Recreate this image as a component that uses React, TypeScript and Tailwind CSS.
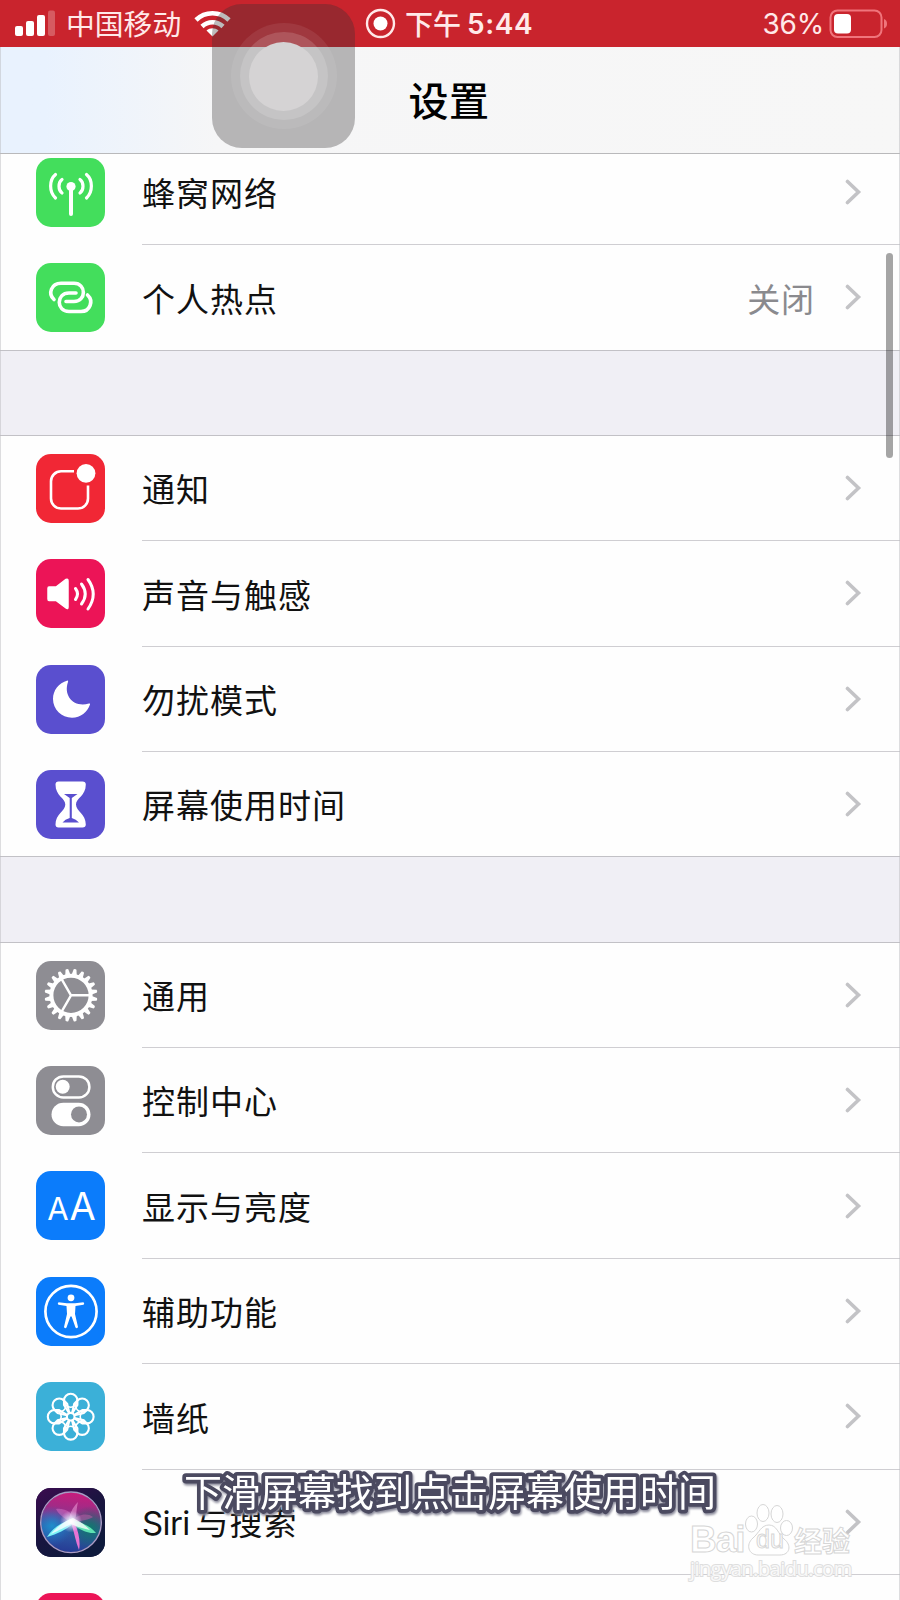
import React from 'react';

const CellularIcon = () => (
  <svg viewBox="0 0 69 69" className="h-full w-full" fill="none" stroke="white" strokeWidth="3.2" strokeLinecap="round">
    <circle cx="35" cy="28.5" r="4.6" fill="white" stroke="none" />
    <path d="M35 29V56" strokeWidth="4" />
    <path d="M26 21.5C22 24.5 22 32 26 35M44 21.5C48 24.5 48 32 44 35" />
    <path d="M19.5 16.5C13 22 13 34 19.5 40M50.5 16.5C57 22 57 34 50.5 40" />
  </svg>
);

const HotspotIcon = () => (
  <svg viewBox="0 0 69 69" className="h-full w-full" fill="none" stroke="white" strokeWidth="3.6" strokeLinecap="round">
    <path d="M18 36.5C11.5 30.5 15.5 20.3 25 20.3H38C50.5 20.3 50.5 38.5 38 38.5H30" />
    <path d="M51.5 32C58 38 54 48.5 45 48.5H33C20 48.5 20 30 33 30H40" />
  </svg>
);

const NotificationIcon = () => (
  <svg viewBox="0 0 69 69" className="h-full w-full" fill="none" stroke="white" strokeWidth="2.6">
    <path d="M38 17.3H25A10 10 0 0 0 15 27.3V44.5A10 10 0 0 0 25 54.5H42A10 10 0 0 0 52 44.5V31.5" />
    <circle cx="50" cy="19.3" r="9.4" fill="white" stroke="none" />
  </svg>
);

const SoundIcon = () => (
  <svg viewBox="0 0 69 69" className="h-full w-full" fill="none" stroke="white" strokeWidth="3" strokeLinecap="round">
    <path d="M13 28H20L30 20.5Q32 19.5 32 22V48Q32 50.5 30 49L20 41.5H13Q12 41.5 12 40V29.5Q12 28 13 28Z" fill="white" strokeWidth="1.5" />
    <path d="M39.5 29.5Q43.5 35 39.5 40.5M45.5 25Q53 35 45.5 45M52 20.5Q62.5 35 52 50" />
  </svg>
);

const MoonIcon = () => (
  <svg viewBox="0 0 69 69" className="h-full w-full">
    <path d="M31.5 15.5C22.5 18 17 25.5 17 34C17 44.5 25.5 52.7 36 52.7C44.5 52.7 51.5 47 54 39.5Q54.5 38 53 38.5C38 43 27 31 32 17Q32.4 15.3 31.5 15.5Z" fill="white" />
  </svg>
);

const HourglassIcon = () => (
  <svg viewBox="0 0 69 69" className="h-full w-full">
    <path d="M22.5 11.5H46.5Q49.8 11.5 49.8 14.5C49.8 26 40 28 40 34.5C40 41 49.8 44 49.8 54.5Q49.8 57.5 46.5 57.5H22.5Q19.5 57.5 19.5 54.5C19.5 44 29.3 41 29.3 34.5C29.3 28 19.5 26 19.5 14.5Q19.5 11.5 22.5 11.5Z" fill="white" />
    <path d="M28 24H41.5L35.8 28V48Q40 49 43 52.5H26.5Q29 49 33.7 48V28Z" fill="#5a4fcf" />
  </svg>
);

const GearIcon = () => (
  <svg viewBox="0 0 69 69" className="h-full w-full" fill="none" stroke="white">
    <circle cx="35" cy="34.3" r="19.6" strokeWidth="4" />
    {Array.from({ length: 20 }, (_, i) => (
      <path key={i} d="M32.3 14.3L33.6 8.2Q35 7.4 36.4 8.2L37.7 14.3Z" fill="white" stroke="none" transform={`rotate(${i * 18 + 9} 35 34.3)`} />
    ))}
    <path d="M35 34.3H53.5M35 34.3L25.8 18.3M35 34.3L25.8 50.3" strokeWidth="2.4" />
  </svg>
);

const ControlIcon = () => (
  <svg viewBox="0 0 69 69" className="h-full w-full">
    <rect x="16.8" y="10.4" width="36.6" height="21" rx="10.5" fill="none" stroke="white" strokeWidth="2.5" />
    <circle cx="26.7" cy="20.8" r="7" fill="white" />
    <rect x="15.5" y="36.7" width="39" height="23.6" rx="11.8" fill="white" />
    <circle cx="43" cy="48.4" r="8" fill="#8e8d93" />
  </svg>
);

const DisplayIcon = () => (
  <div className="flex h-full items-baseline justify-center gap-[2px] font-['Inter',sans-serif] leading-[71px] text-white">
    <span className="text-[31px] tracking-[-1px]">A</span>
    <span className="text-[38px] tracking-[-2px]">A</span>
  </div>
);

const AccessibilityIcon = () => (
  <svg viewBox="0 0 69 69" className="h-full w-full">
    <circle cx="35" cy="34.5" r="25.6" fill="none" stroke="white" strokeWidth="2.7" />
    <circle cx="35" cy="20.8" r="3.4" fill="white" />
    <path d="M22.5 25.2L31 26.2H39L47.5 25.2Q49 26.7 47.5 27.8L39.5 29L39 37L42 50Q41 52 39.5 50.6L35.6 39.5H34.4L30.5 50.6Q29 52 28 50L31 37L30.5 29L22.5 27.8Q21 26.7 22.5 25.2Z" fill="white" />
  </svg>
);

const WallpaperIcon = () => (
  <svg viewBox="0 0 69 69" className="h-full w-full" fill="none" stroke="white" strokeWidth="2.1">
    {[0, 45, 90, 135, 180, 225, 270, 315].map((angle) => (
      <path key={angle} d="M33 31L28 23V18.5A6.7 6.7 0 0 1 41.4 18.5V23L36.4 31" transform={`rotate(${angle} 34.7 34.7)`} />
    ))}
    {[0, 45, 90, 135, 180, 225, 270, 315].map((angle) => (
      <path key={angle} d="M28 18.5A6.7 6.7 0 0 0 41.4 18.5" strokeWidth="1.6" transform={`rotate(${angle} 34.7 34.7)`} />
    ))}
    <circle cx="34.7" cy="34.7" r="3.8" />
  </svg>
);

const SiriIcon = () => (
  <svg viewBox="0 0 69 69" className="h-full w-full">
    <defs>
      <linearGradient id="siriBack" x1="0" y1="0" x2="0.6" y2="1">
        <stop offset="0" stopColor="#3c0b50" />
        <stop offset="0.5" stopColor="#1b1440" />
        <stop offset="1" stopColor="#0e1a3c" />
      </linearGradient>
      <linearGradient id="siriOrb" x1="0.5" y1="0" x2="0.4" y2="1">
        <stop offset="0" stopColor="#c81c7c" />
        <stop offset="0.35" stopColor="#93308a" />
        <stop offset="0.6" stopColor="#2e62a8" />
        <stop offset="1" stopColor="#263a94" />
      </linearGradient>
      <radialGradient id="siriBlue">
        <stop offset="0" stopColor="#1f8fcc" />
        <stop offset="1" stopColor="#1f6fc8" stopOpacity="0" />
      </radialGradient>
      <radialGradient id="siriGreen">
        <stop offset="0" stopColor="#0f7a6c" />
        <stop offset="1" stopColor="#12605f" stopOpacity="0" />
      </radialGradient>
      <radialGradient id="siriGlow">
        <stop offset="0" stopColor="white" />
        <stop offset="0.3" stopColor="#e8f4ff" stopOpacity="0.8" />
        <stop offset="1" stopColor="#e8d4ff" stopOpacity="0" />
      </radialGradient>
      <clipPath id="siriClip">
        <circle cx="35" cy="34.3" r="30" />
      </clipPath>
    </defs>
    <rect width="69" height="69" fill="url(#siriBack)" />
    <g clipPath="url(#siriClip)">
      <circle cx="35" cy="34.3" r="30" fill="url(#siriOrb)" />
      <circle cx="16" cy="38" r="20" fill="url(#siriBlue)" />
      <circle cx="54" cy="40" r="22" fill="url(#siriGreen)" />
      <path d="M36 31C27 34 17 39 11 49C22 46 31 41 38 35Z" fill="#7df3f5" />
      <path d="M33 31C43 34 54 37 60 45C50 46 41 40 34 34Z" fill="#5fe3b4" />
      <path d="M34 32C38 42 39 52 43 62C45 53 42 41 37 32Z" fill="#e873d4" />
      <path d="M35 34C29 31 22 26 20 21C30 20 38 25 37 34Z" fill="#d874c8" fillOpacity="0.5" />
      <path d="M33 34C33 27 36 20 42 14C40 22 41 28 38 34Z" fill="#f6a5df" fillOpacity="0.5" />
      <path d="M35 33C41 27 51 24 57 29C52 32 43 34 35 33Z" fill="#c85aa8" fillOpacity="0.5" />
      <circle cx="35" cy="33.5" r="11" fill="url(#siriGlow)" />
      <path d="M37 30C29 33 22 38 15 46C24 42 29 39 35 36C39 38 45 40 54 42C48 36 43 33 37 30Z" fill="white" fillOpacity="0.75" />
    </g>
    <circle cx="35" cy="34.3" r="30.3" fill="none" stroke="#a99bc4" strokeWidth="1.4" />
  </svg>
);

type Item = {
  label: React.ReactNode;
  color: string;
  icon: React.ReactNode;
  value?: string;
};

const network: Item[] = [
  { label: '蜂窝网络', color: 'bg-[#43de5c]', icon: <CellularIcon /> },
  { label: '个人热点', color: 'bg-[#43de5c]', icon: <HotspotIcon />, value: '关闭' },
];

const alerts: Item[] = [
  { label: '通知', color: 'bg-[#f12735]', icon: <NotificationIcon /> },
  { label: '声音与触感', color: 'bg-[#ec1457]', icon: <SoundIcon /> },
  { label: '勿扰模式', color: 'bg-[#5a4fcf]', icon: <MoonIcon /> },
  { label: '屏幕使用时间', color: 'bg-[#5a4fcf]', icon: <HourglassIcon /> },
];

const siriLabel = (
  <>
    <span className="font-['Inter',sans-serif] tracking-[-0.6px] [word-spacing:-3px]">Siri </span>
    与搜索
  </>
);

const system: Item[] = [
  { label: '通用', color: 'bg-[#8e8d93]', icon: <GearIcon /> },
  { label: '控制中心', color: 'bg-[#8e8d93]', icon: <ControlIcon /> },
  { label: '显示与亮度', color: 'bg-[#0b7cfb]', icon: <DisplayIcon /> },
  { label: '辅助功能', color: 'bg-[#0b7cfb]', icon: <AccessibilityIcon /> },
  { label: '墙纸', color: 'bg-[#3bb0d8]', icon: <WallpaperIcon /> },
  { label: siriLabel, color: 'bg-[#1b1440]', icon: <SiriIcon /> },
  { label: '', color: 'bg-[#ec1457]', icon: null },
];

const Row = ({ item }: { item: Item }) => (
  <div className="group flex h-[105.4px] shrink-0 pl-9 last:border-b last:border-[#c2c1c6]">
    <div className={`mt-[18px] h-[69px] w-[69px] shrink-0 overflow-hidden rounded-[15px] ${item.color}`}>{item.icon}</div>
    <div className="ml-[37px] flex flex-1 items-center border-b border-[#cfced2] pr-[38px] group-last:border-b-0">
      <span className="flex-1 pt-[2px] text-[33px] tracking-[1px] whitespace-pre text-[#111]">{item.label}</span>
      {item.value && <span className="mr-[30px] pt-[2px] text-[33px] tracking-[0.9px] text-[#8a8a8e]">{item.value}</span>}
      <svg width="17" height="26" viewBox="0 0 17 26" fill="none" stroke="#c3c3c6" strokeWidth="3.6" strokeLinecap="round">
        <path d="M2.5 2.5L13.5 13L2.5 23.5" />
      </svg>
    </div>
  </div>
);

const Group = ({ items }: { items: Item[] }) => (
  <div className="border-t border-[#c2c1c6] bg-[#fefefe]">
    {items.map((item, i) => (
      <Row key={i} item={item} />
    ))}
  </div>
);

const StatusBar = () => (
  <div className="flex h-[47px] items-center bg-[#c9242d] pl-[15px] text-[#ffe9e9]">
    <svg width="40" height="27" viewBox="0 0 40 27" fill="white">
      <rect x="0" y="16" width="8" height="10" rx="2" />
      <rect x="11" y="11" width="8" height="15" rx="2" />
      <rect x="22" y="5" width="8" height="21" rx="2" />
      <rect x="33" y="0.5" width="7" height="25.5" rx="2" fillOpacity="0.25" />
    </svg>
    <span className="mb-px ml-[11px] w-[128px] text-[28.8px]">中国移动</span>
    <svg width="37" height="28" viewBox="0 0 37 28" fill="none" stroke="white" strokeWidth="4.6">
      <path d="M2 10C11 1 26 1 35 10" />
      <path d="M8 16.5C14 10.8 23 10.8 29 16.5" />
      <path d="M18.5 26.5L12.5 20.5C16 17.5 21 17.5 24.5 20.5Z" fill="white" stroke="none" />
    </svg>
    <svg width="31" height="31" viewBox="0 0 31 31" className="ml-[134px]">
      <circle cx="15.5" cy="15.5" r="13.5" fill="none" stroke="#ffe9e9" strokeWidth="2.4" />
      <circle cx="15.5" cy="15.5" r="7" fill="white" />
    </svg>
    <span className="mb-[2px] ml-[9px] text-[28px] font-medium">下午</span>
    <span className="ml-[6px] font-['Inter',sans-serif] text-[28px] font-semibold tracking-[0.6px]">5:44</span>
    <span className="ml-auto font-['Inter',sans-serif] text-[28px] tracking-[-0.2px]">36%</span>
    <svg width="59" height="30" viewBox="0 0 59 30" className="mr-[12px] ml-[5px]">
      <rect x="1.5" y="1.5" width="51" height="26.5" rx="7" fill="none" stroke="#f0757c" strokeWidth="2" />
      <rect x="5" y="5" width="17" height="19.5" rx="4" fill="white" />
      <path d="M55 10Q58 11 58 14.7T55 19.5Z" fill="#f0757c" />
    </svg>
  </div>
);

const AssistiveTouch = () => (
  <div className="absolute top-1 left-[212px] z-20 flex h-36 w-[143px] items-center justify-center rounded-[30px] bg-[#343034]/33">
    <div className="flex h-[106px] w-[106px] items-center justify-center rounded-full bg-white/8">
      <div className="flex h-[88px] w-[88px] items-center justify-center rounded-full bg-white/15">
        <div className="h-[69px] w-[69px] rounded-full bg-[#d5d3d4]" />
      </div>
    </div>
  </div>
);

const Watermark = () => (
  <div className="absolute top-[1501px] left-[690px] z-20 w-[170px] text-white/80">
    <div className="flex h-[56px] items-end font-bold [-webkit-text-stroke:1px_#d6d6d6]">
      <span className="w-[55px] font-['Liberation_Sans',sans-serif] text-[37px] leading-[34px] tracking-[-1px]">Bai</span>
      <div className="relative h-[54px] w-[49px]">
        <svg width="50" height="54" viewBox="0 0 50 54" fill="white" fillOpacity="0.8" stroke="#d6d6d6">
          <ellipse cx="6.5" cy="21" rx="6" ry="8" />
          <ellipse cx="18" cy="10" rx="6" ry="8.5" />
          <ellipse cx="32" cy="11" rx="6" ry="8.5" />
          <ellipse cx="41.5" cy="25" rx="6" ry="7.5" />
          <path d="M24 22C16 22 14 30 8 35C0 42 4 52 13 52H35C45 52 47 42 39 36C33 31 32 22 24 22Z" />
        </svg>
        <span className="absolute top-[22px] left-[11px] font-['Liberation_Sans',sans-serif] text-[25px] leading-[28px] font-normal">du</span>
      </div>
      <span className="text-[28px] leading-[34px]">经验</span>
    </div>
    <div className="mt-[-2px] font-['Open_Sans',sans-serif] text-[20px] leading-[28px] tracking-[-0.5px] [-webkit-text-stroke:2px_#dedede] [paint-order:stroke_fill]">jingyan.baidu.com</div>
  </div>
);

const App = () => {
  return (
    <div className="relative flex h-[1600px] w-[900px] flex-col overflow-hidden bg-[#f0eff5] font-['Noto_Sans_CJK_SC',sans-serif]">
      <div className="relative z-10">
        <StatusBar />
        <div className="flex h-[107px] items-center justify-center border-b border-[#b9b9bb] bg-linear-to-r from-[#e9f2fe] from-5% via-[#f6f6f7] via-24% to-[#f7f7f7]">
          <h1 className="pr-[2px] pb-[3px] text-[40px] font-medium tracking-[0.5px] text-black">设置</h1>
        </div>
      </div>

      <div className="mt-[-15.1px] flex flex-col gap-[84.2px]">
        <Group items={network} />
        <Group items={alerts} />
        <Group items={system} />
      </div>

      {/* Scroll indicator */}
      <div className="absolute top-[253px] right-[7px] z-20 h-[205px] w-[7px] rounded-full bg-black/35" />

      <AssistiveTouch />

      {/* Caption */}
      <svg width="560" height="64" viewBox="0 0 560 64" className="absolute top-[1460px] left-[174px] z-20">
        <g fontSize="38" fontFamily="Noto Sans CJK SC, sans-serif">
          <text x="10" y="46" fill="white" stroke="#4b4a60" strokeWidth="7.5" strokeLinejoin="round" paintOrder="stroke" textLength="532" className="drop-shadow-[1px_2px_1px_#8c8c9c]">
            下滑屏幕找到点击屏幕使用时间
          </text>
        </g>
      </svg>

      <Watermark />

      <div className="pointer-events-none absolute inset-x-0 top-[47px] bottom-0 z-30 border-x border-[#bbbbc0]/50" />
    </div>
  );
};

export default App;
